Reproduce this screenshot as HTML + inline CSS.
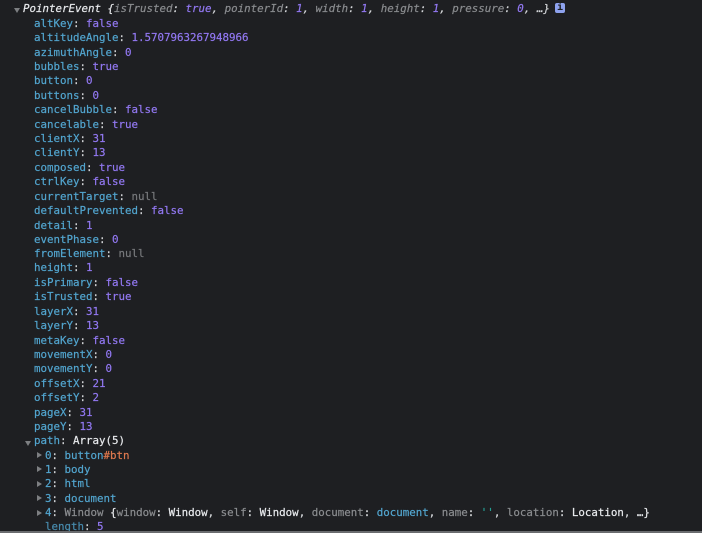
<!DOCTYPE html>
<html><head><meta charset="utf-8"><style>
html,body{margin:0;padding:0;background:#1e1f22;width:702px;height:533px;overflow:hidden}
#w{position:relative;width:702px;height:533px;overflow:hidden;font:10.8px/14px "DejaVu Sans Mono","Liberation Mono",monospace;color:#d5d7da;-webkit-text-stroke:.2px;top:0}
.r{position:absolute;white-space:pre;left:34px}
.k{color:#52a5cf}.n{color:#9278f2}.g{color:#77797c}.d{color:#8a8c8f}.w{color:#e8eaed}.t{color:#26a69a}.o{color:#e0794f}.b{color:#52a5cf}
.a{position:absolute;width:0;height:0}
.dn{border-left:3.5px solid transparent;border-right:3.5px solid transparent;border-top:5px solid #7d7f82}
.rt{border-top:3.5px solid transparent;border-bottom:3.5px solid transparent;border-left:5px solid #7d7f82}
#line{position:absolute;left:0;right:0;top:531px;height:2px;background:#6a6c6f}
#i{position:absolute;left:555px;top:3px;width:10px;height:10px;border-radius:2px;background:#8ea2ee;color:#1d1f22;font:bold 10px/10px "DejaVu Sans Mono",monospace;text-align:center;-webkit-text-stroke:0}
</style></head><body><div id="w">
<div class="a dn" style="left:14px;top:8px"></div>
<div class="r" style="left:23px;top:2px;font-style:italic"><span class="w">PointerEvent {</span><span class="d">isTrusted</span>: <span class="n">true</span>, <span class="d">pointerId</span>: <span class="n">1</span>, <span class="d">width</span>: <span class="n">1</span>, <span class="d">height</span>: <span class="n">1</span>, <span class="d">pressure</span>: <span class="n">0</span>, …}</div>
<div id="i">i</div>
<div class="r" style="top:17px"><span class="k">altKey</span>: <span class="n">false</span></div>
<div class="r" style="top:31px"><span class="k">altitudeAngle</span>: <span class="n">1.5707963267948966</span></div>
<div class="r" style="top:46px"><span class="k">azimuthAngle</span>: <span class="n">0</span></div>
<div class="r" style="top:60px"><span class="k">bubbles</span>: <span class="n">true</span></div>
<div class="r" style="top:74px"><span class="k">button</span>: <span class="n">0</span></div>
<div class="r" style="top:89px"><span class="k">buttons</span>: <span class="n">0</span></div>
<div class="r" style="top:103px"><span class="k">cancelBubble</span>: <span class="n">false</span></div>
<div class="r" style="top:118px"><span class="k">cancelable</span>: <span class="n">true</span></div>
<div class="r" style="top:132px"><span class="k">clientX</span>: <span class="n">31</span></div>
<div class="r" style="top:146px"><span class="k">clientY</span>: <span class="n">13</span></div>
<div class="r" style="top:161px"><span class="k">composed</span>: <span class="n">true</span></div>
<div class="r" style="top:175px"><span class="k">ctrlKey</span>: <span class="n">false</span></div>
<div class="r" style="top:190px"><span class="k">currentTarget</span>: <span class="g">null</span></div>
<div class="r" style="top:204px"><span class="k">defaultPrevented</span>: <span class="n">false</span></div>
<div class="r" style="top:219px"><span class="k">detail</span>: <span class="n">1</span></div>
<div class="r" style="top:233px"><span class="k">eventPhase</span>: <span class="n">0</span></div>
<div class="r" style="top:247px"><span class="k">fromElement</span>: <span class="g">null</span></div>
<div class="r" style="top:261px"><span class="k">height</span>: <span class="n">1</span></div>
<div class="r" style="top:276px"><span class="k">isPrimary</span>: <span class="n">false</span></div>
<div class="r" style="top:290px"><span class="k">isTrusted</span>: <span class="n">true</span></div>
<div class="r" style="top:305px"><span class="k">layerX</span>: <span class="n">31</span></div>
<div class="r" style="top:319px"><span class="k">layerY</span>: <span class="n">13</span></div>
<div class="r" style="top:334px"><span class="k">metaKey</span>: <span class="n">false</span></div>
<div class="r" style="top:348px"><span class="k">movementX</span>: <span class="n">0</span></div>
<div class="r" style="top:362px"><span class="k">movementY</span>: <span class="n">0</span></div>
<div class="r" style="top:377px"><span class="k">offsetX</span>: <span class="n">21</span></div>
<div class="r" style="top:391px"><span class="k">offsetY</span>: <span class="n">2</span></div>
<div class="r" style="top:406px"><span class="k">pageX</span>: <span class="n">31</span></div>
<div class="r" style="top:420px"><span class="k">pageY</span>: <span class="n">13</span></div>
<div class="a dn" style="left:25px;top:441px"></div>
<div class="r" style="top:434px"><span class="k">path</span>: <span class="w">Array(5)</span></div>
<div class="a rt" style="left:37px;top:452px"></div>
<div class="r" style="left:45px;top:449px"><span class="k">0</span>: <span class="b">button</span><span class="o">#btn</span></div>
<div class="a rt" style="left:37px;top:466px"></div>
<div class="r" style="left:45px;top:463px"><span class="k">1</span>: <span class="b">body</span></div>
<div class="a rt" style="left:37px;top:481px"></div>
<div class="r" style="left:45px;top:477px"><span class="k">2</span>: <span class="b">html</span></div>
<div class="a rt" style="left:37px;top:495px"></div>
<div class="r" style="left:45px;top:492px"><span class="k">3</span>: <span class="b">document</span></div>
<div class="a rt" style="left:37px;top:510px"></div>
<div class="r" style="left:45px;top:506px"><span class="k">4</span>: <span class="d">Window</span> <span class="w">{</span><span class="d">window</span>: <span class="w">Window</span>, <span class="d">self</span>: <span class="w">Window</span>, <span class="d">document</span>: <span class="b">document</span>, <span class="d">name</span>: <span class="t">''</span>, <span class="d">location</span>: <span class="w">Location</span>, <span class="w">…}</span></div>
<div class="r" style="left:45px;top:520px"><span class="k" style="opacity:.8">length</span>: <span class="n">5</span></div>
<div id="line"></div>
</div></body></html>
